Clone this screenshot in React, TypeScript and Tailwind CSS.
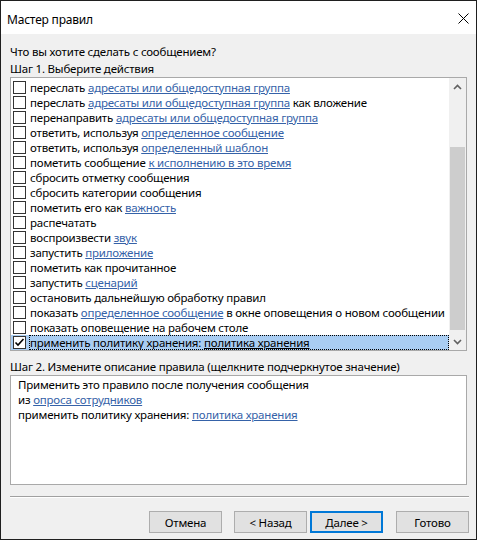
import React from "react";

type Part = { t: string; link?: boolean };
type Row = { parts: Part[]; checked?: boolean; selected?: boolean };

const rows: Row[] = [
  { parts: [{ t: "переслать " }, { t: "адресаты или общедоступная группа", link: true }] },
  { parts: [{ t: "переслать " }, { t: "адресаты или общедоступная группа", link: true }, { t: " как вложение" }] },
  { parts: [{ t: "перенаправить " }, { t: "адресаты или общедоступная группа", link: true }] },
  { parts: [{ t: "ответить, используя " }, { t: "определенное сообщение", link: true }] },
  { parts: [{ t: "ответить, используя " }, { t: "определенный шаблон", link: true }] },
  { parts: [{ t: "пометить сообщение " }, { t: "к исполнению в это время", link: true }] },
  { parts: [{ t: "сбросить отметку сообщения" }] },
  { parts: [{ t: "сбросить категории сообщения" }] },
  { parts: [{ t: "пометить его как " }, { t: "важность", link: true }] },
  { parts: [{ t: "распечатать" }] },
  { parts: [{ t: "воспроизвести " }, { t: "звук", link: true }] },
  { parts: [{ t: "запустить " }, { t: "приложение", link: true }] },
  { parts: [{ t: "пометить как прочитанное" }] },
  { parts: [{ t: "запустить " }, { t: "сценарий", link: true }] },
  { parts: [{ t: "остановить дальнейшую обработку правил" }] },
  { parts: [{ t: "показать " }, { t: "определенное сообщение", link: true }, { t: " в окне оповещения о новом сообщении" }] },
  { parts: [{ t: "показать оповещение на рабочем столе" }] },
  {
    parts: [{ t: "применить политику хранения: " }, { t: "политика хранения", link: true }],
    checked: true,
    selected: true,
  },
];

function CheckBox({ checked }: { checked?: boolean }) {
  return (
    <div className="w-[13px] h-[13px] border border-[#333333] bg-white flex items-center justify-center shrink-0">
      {checked && (
        <svg width="11" height="11" viewBox="0 0 11 11">
          <path d="M1.5 5.5 L4 8 L9.5 2" fill="none" stroke="#000" strokeWidth="1.6" />
        </svg>
      )}
    </div>
  );
}

function ListRow({ row }: { row: Row }) {
  return (
    <div className={`h-[15px] flex items-center min-w-0 ${row.selected ? "bg-[#a9cdf2]" : ""}`}>
      <div className="w-[18px] flex items-center pl-[2px] shrink-0">
        <CheckBox checked={row.checked} />
      </div>
      <div
        className={`h-[15px] flex-1 min-w-0 overflow-hidden whitespace-pre ${
          row.selected ? "border border-dotted border-black leading-[13px]" : "pl-[1px]"
        }`}
      >
        {row.parts.map((p, i) =>
          p.link ? (
            <span
              key={i}
              className={`underline ${row.selected ? "text-black" : "text-[#3562a8]"}`}
            >
              {p.t}
            </span>
          ) : (
            <span key={i}>{p.t}</span>
          )
        )}
      </div>
    </div>
  );
}

function Chevron({ up }: { up?: boolean }) {
  return (
    <svg width="9" height="6" viewBox="0 0 9 6">
      <path
        d={up ? "M1 5 L4.5 1.5 L8 5" : "M1 1 L4.5 4.5 L8 1"}
        fill="none"
        stroke="#606060"
        strokeWidth="1.6"
      />
    </svg>
  );
}

function Button({ label, primary }: { label: string; primary?: boolean }) {
  return (
    <div
      className={`w-[73px] h-[22px] flex items-center justify-center bg-[#e1e1e1] ${
        primary ? "border-2 border-[#0078d7]" : "border border-[#adadad]"
      }`}
    >
      {label}
    </div>
  );
}

export default function App() {
  return (
    <div className="w-[477px] h-[540px] border border-[#1f1f1f] bg-[#f0f0f0] flex flex-col text-[11.5px] tracking-[-0.2px] leading-[15px] text-black font-['Noto_Sans',_sans-serif]">
      {/* Title bar */}
      <div className="h-[33px] bg-white flex items-center justify-between pl-[6px] pr-[4px] shrink-0">
        <span className="pt-[4px] text-[12px]">Мастер правил</span>
        <div className="w-[20px] h-[20px] flex items-center justify-center mr-[-1px] mt-[2px]">
          <svg width="11" height="11" viewBox="0 0 11 11">
            <path d="M0.5 0.5 L10.5 10.5 M10.5 0.5 L0.5 10.5" stroke="#000" strokeWidth="1" />
          </svg>
        </div>
      </div>

      {/* Body */}
      <div className="flex flex-col px-[9px] pt-[9px] flex-1 min-w-0">
        <div className="h-[17px] leading-[17px]">Что вы хотите сделать с сообщением?</div>
        <div className="h-[17px] leading-[17px]">Шаг 1. Выберите действия</div>

        {/* Actions list */}
        <div className="h-[274px] border border-[#a9a9a9] bg-white flex min-w-0">
          <div className="flex-1 min-w-0 overflow-hidden flex flex-col pt-[2px]">
            {rows.map((r, i) => (
              <ListRow key={i} row={r} />
            ))}
          </div>
          <div className="w-[17px] shrink-0 bg-[#f0f0f0] flex flex-col">
            <div className="h-[17px] flex items-center justify-center">
              <Chevron up />
            </div>
            <div className="flex-1 flex flex-col">
              <div className="h-[52px]" />
              <div className="h-[183px] bg-[#cdcdcd] mx-[1px]" />
              <div className="flex-1" />
            </div>
            <div className="h-[17px] flex items-center justify-center">
              <Chevron />
            </div>
          </div>
        </div>

        <div className="mt-[7px] h-[17px] leading-[17px]">
          Шаг 2. Измените описание правила (щелкните подчеркнутое значение)
        </div>

        {/* Description box */}
        <div className="h-[110px] border border-[#a9a9a9] bg-white pl-[7px] pt-[1px] flex flex-col">
          <div>Применить это правило после получения сообщения</div>
          <div>
            из <span className="underline text-[#3562a8]">опроса сотрудников</span>
          </div>
          <div>
            применить политику хранения:{" "}
            <span className="underline text-[#3562a8]">политика хранения</span>
          </div>
        </div>

        {/* Separator */}
        <div className="mt-[11px] mr-[-2px] border-t border-[#a0a0a0] border-b border-b-white" />

        {/* Buttons */}
        <div className="mt-[13px] flex justify-end mr-[-2px]">
          <Button label="Отмена" />
          <div className="w-[12px]" />
          <Button label="< Назад" />
          <div className="w-[3px]" />
          <Button label="Далее >" primary />
          <div className="w-[13px]" />
          <Button label="Готово" />
        </div>
      </div>
    </div>
  );
}
